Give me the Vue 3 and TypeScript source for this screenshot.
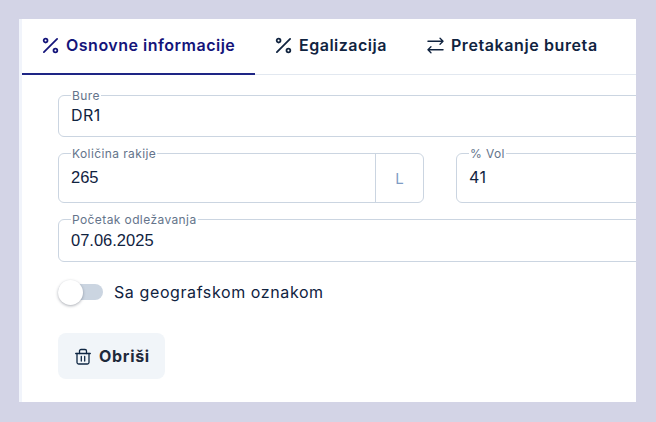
<script setup lang="ts">
const tabs = [
  { label: 'Osnovne informacije', icon: 'percent', active: true },
  { label: 'Egalizacija', icon: 'percent', active: false },
  { label: 'Pretakanje bureta', icon: 'swap', active: false },
]
</script>

<template>
  <div class="page">
    <div class="card">
      <div class="tabs">
        <div v-for="t in tabs" :key="t.label" class="tab" :class="{ active: t.active }">
          <svg v-if="t.icon === 'percent'" class="ticon" viewBox="0 0 18 18" fill="none" stroke="currentColor" stroke-width="1.9" stroke-linecap="round">
            <path d="M2 16 L16 2" />
            <circle cx="3.8" cy="3.8" r="2" />
            <circle cx="14.2" cy="14.2" r="2" />
          </svg>
          <svg v-else class="ticon" viewBox="0 0 18 18" fill="none" stroke="currentColor" stroke-width="1.4" stroke-linecap="round" stroke-linejoin="round">
            <path d="M1 4.5 H17 M13.8 1.3 L17 4.5 L13.8 7.7" />
            <path d="M17 13.5 H1 M4.2 10.3 L1 13.5 L4.2 16.7" />
          </svg>
          <span>{{ t.label }}</span>
        </div>
      </div>
      <div class="form">
        <div class="field h42">
          <span class="flabel">Bure</span>
          <span class="val">DR1</span>
        </div>
        <div class="row">
          <div class="field h50 group">
            <span class="flabel">Količina rakije</span>
            <span class="val num">265</span>
            <span class="unit">L</span>
          </div>
          <div class="field h50">
            <span class="flabel">% Vol</span>
            <span class="val">41</span>
          </div>
        </div>
        <div class="field h43">
          <span class="flabel">Početak odležavanja</span>
          <span class="val num">07.06.2025</span>
        </div>
        <div class="toggle-row">
          <div class="track"><div class="knob"></div></div>
          <span class="tlabel">Sa geografskom oznakom</span>
        </div>
        <button class="del" type="button">
          <svg width="16" height="17" viewBox="0 0 16 17" fill="none" stroke="#0f2744" stroke-width="1.3" stroke-linecap="round" stroke-linejoin="round">
            <path d="M0.7 5.5 H15.3" />
            <path d="M4.5 5.5 V3 A1.5 1.5 0 0 1 6 1.5 H10 A1.5 1.5 0 0 1 11.5 3 V5.5" />
            <path d="M2 5.5 V14.5 A1.6 1.6 0 0 0 3.6 16 H12.4 A1.6 1.6 0 0 0 14 14.5 V5.5" />
            <path d="M6.3 8.5 V13 M9.7 8.5 V13" />
          </svg>
          <span>Obriši</span>
        </button>
      </div>
    </div>
  </div>
</template>

<style>
html, body { margin: 0; background: #d3d4e6; }
</style>

<style scoped>
.page {
  width: 656px;
  height: 422px;
  padding: 19px 20px 20px 19px;
  box-sizing: border-box;
  background: #d3d4e6;
  overflow: hidden;
  font-family: "Inter", "Liberation Sans", sans-serif;
}
.card {
  height: 383px;
  background: #fff;
  border-left: 3px solid #f1f4fb;
  overflow: hidden;
}
.tabs {
  display: flex;
  height: 56px;
  box-sizing: border-box;
  border-bottom: 1px solid #e2e8f0;
}
.tab {
  display: flex;
  align-items: center;
  gap: 7px;
  height: 52px;
  padding: 0 20px;
  font-size: 16px;
  font-weight: 600;
  color: #10233f;
  white-space: nowrap;
  letter-spacing: 0.5px;
  box-sizing: content-box;
}
.tab:last-child { letter-spacing: 0.6px; }
.tab.active {
  color: #14147a;
  height: 54px;
  width: 193px;
  padding-bottom: 0;
  border-bottom: 2px solid #1e2585;
  margin-bottom: -1px;
}
.tab.active > * { position: relative; top: -1px; }
.ticon { width: 17px; height: 17px; flex: none; }
.form {
  width: 764px;
  margin-left: 36px;
  padding-top: 20px;
  display: flex;
  flex-direction: column;
  gap: 16px;
}
.field {
  position: relative;
  box-sizing: border-box;
  border: 1px solid #cbd5e1;
  border-radius: 6px;
  display: flex;
  width: 100%;
  padding-left: 12px;
  color: #10233f;
}
.h42 { height: 42px; }
.h50 { height: 50px; }
.h43 { height: 43px; }
.row { display: flex; gap: 32px; }
.row .field { flex: 1 1 0; }
.flabel {
  position: absolute;
  left: 12px;
  top: -7px;
  padding: 0 1px;
  background: #fff;
  font-size: 12px;
  line-height: 14px;
  letter-spacing: 0.4px;
  color: #64748b;
  white-space: nowrap;
}
.val {
  font-size: 16px;
  line-height: 20px;
  letter-spacing: 0.4px;
  margin-top: 9px;
}
.h50 .val { margin-top: 13px; }
.h43 .val { margin-top: 10px; }
.num { font-family: "Liberation Sans", sans-serif; font-size: 16.5px; letter-spacing: 0; }
.group { padding-right: 0; }
.unit {
  margin-left: auto;
  width: 48px;
  box-sizing: border-box;
  border-left: 1px solid #cbd5e1;
  display: flex;
  align-items: center;
  justify-content: center;
  font-size: 15px;
  color: #7f9cc4;
}
.toggle-row {
  display: flex;
  align-items: center;
  height: 26px;
  margin-top: 1px;
}
.track {
  position: relative;
  width: 45px;
  height: 16px;
  background: #cbd5e1;
  border-radius: 8px;
}
.knob {
  position: absolute;
  left: 0;
  top: -4.5px;
  width: 25px;
  height: 25px;
  background: #fff;
  border-radius: 50%;
  box-shadow: 0 1px 3px rgba(15, 23, 42, 0.35);
}
.tlabel {
  margin-left: 11px;
  font-size: 16px;
  letter-spacing: 0.6px;
  color: #10233f;
}
.del {
  display: flex;
  align-items: center;
  gap: 8px;
  align-self: flex-start;
  width: 107px;
  height: 46px;
  margin-top: 12px;
  padding: 0 0 0 17px;
  border: 0;
  border-radius: 8px;
  background: #f1f5f9;
  color: #1e293b;
  font-family: inherit;
  font-size: 16px;
  letter-spacing: 0.7px;
  font-weight: 700;
}
</style>
